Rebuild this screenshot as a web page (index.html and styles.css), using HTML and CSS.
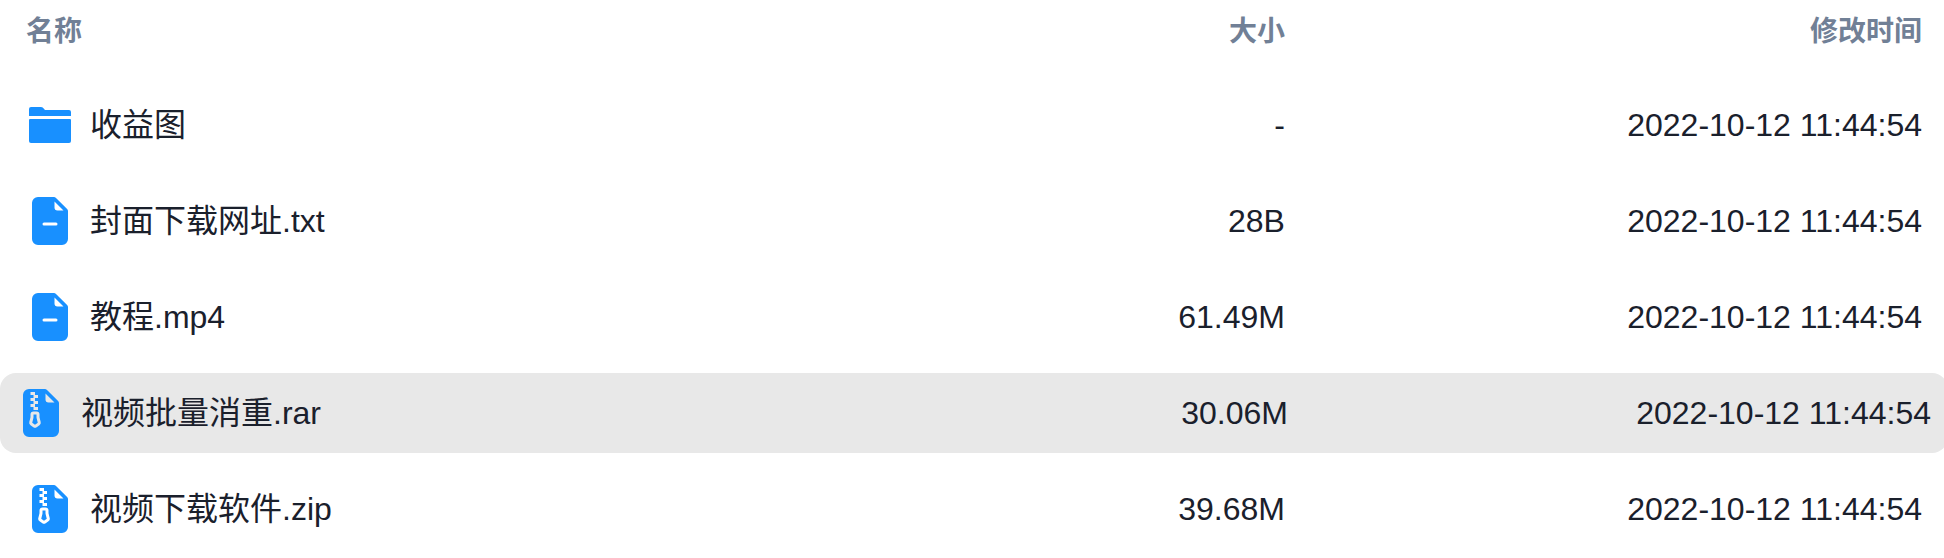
FILE: index.html
```html
<!DOCTYPE html>
<html lang="zh-CN">
<head>
    <meta charset="UTF-8">
    <meta name="viewport" content="width=device-width, initial-scale=1.0">
    <title>文件列表</title>
    <link rel="stylesheet" href="styles.css">
</head>
<body>
    <!-- icônes partagées -->
    <svg class="sprite" aria-hidden="true">
        <symbol id="icon-folder" viewBox="0 0 48 48">
            <path d="M3 8a2 2 0 0 1 2-2h10q1 0 1.700.6L19 9h24a2 2 0 0 1 2 2v4H3z"/>
            <path d="M3 19a1 1 0 0 1 1-1h40a1 1 0 0 1 1 1v21a2 2 0 0 1-2 2H5a2 2 0 0 1-2-2z"/>
        </symbol>
        <symbol id="icon-file" viewBox="0 0 16 16">
            <path d="M9.293 0H4a2 2 0 0 0-2 2v12a2 2 0 0 0 2 2h8a2 2 0 0 0 2-2V4.707A1 1 0 0 0 13.707 4L10 .293A1 1 0 0 0 9.293 0zM9.500 3.500v-2l3 3h-2a1 1 0 0 1-1-1zM6 8.500h4a.5.5 0 0 1 0 1H6a.5.5 0 0 1 0-1z" fill-rule="evenodd"/>
        </symbol>
        <symbol id="icon-zip" viewBox="0 0 16 16">
            <path d="M5.500 9.438V8.500h1v.938a1 1 0 0 0 .03.243l.4 1.598-.93.62-.93-.62.4-1.598a1 1 0 0 0 .03-.243z"/>
            <path d="M9.293 0H4a2 2 0 0 0-2 2v12a2 2 0 0 0 2 2h8a2 2 0 0 0 2-2V4.707A1 1 0 0 0 13.707 4L10 .293A1 1 0 0 0 9.293 0zM9.500 3.500v-2l3 3h-2a1 1 0 0 1-1-1zm-4-.5V2h-1V1H6v1h1v1H6v1h1v1H6v1h1v1H5.500V6h-1V5h1V4h-1V3h1zm0 4.500h1a1 1 0 0 1 1 1v.938l.4 1.599a1 1 0 0 1-.416 1.074l-.93.62a1 1 0 0 1-1.109 0l-.93-.62a1 1 0 0 1-.415-1.074l.4-1.599V8.500a1 1 0 0 1 1-1z" fill-rule="evenodd"/>
        </symbol>
    </svg>

    <table class="list">
        <thead class="head">
            <tr class="row">
                <th class="name">名称</th>
                <th class="size">大小</th>
                <th class="date">修改时间</th>
            </tr>
        </thead>
        <tbody class="items">
            <tr class="row">
                <td class="name"><a href="#"><svg class="icon"><use href="#icon-folder"/></svg>收益图</a></td>
                <td class="size">-</td>
                <td class="date">2022-10-12 11:44:54</td>
            </tr>
            <tr class="row">
                <td class="name"><a href="#"><svg class="icon"><use href="#icon-file"/></svg>封面下载网址.txt</a></td>
                <td class="size">28B</td>
                <td class="date">2022-10-12 11:44:54</td>
            </tr>
            <tr class="row">
                <td class="name"><a href="#"><svg class="icon"><use href="#icon-file"/></svg>教程.mp4</a></td>
                <td class="size">61.49M</td>
                <td class="date">2022-10-12 11:44:54</td>
            </tr>
            <tr class="row active">
                <td class="name"><a href="#"><svg class="icon"><use href="#icon-zip"/></svg>视频批量消重.rar</a></td>
                <td class="size">30.06M</td>
                <td class="date">2022-10-12 11:44:54</td>
            </tr>
            <tr class="row">
                <td class="name"><a href="#"><svg class="icon"><use href="#icon-zip"/></svg>视频下载软件.zip</a></td>
                <td class="size">39.68M</td>
                <td class="date">2022-10-12 11:44:54</td>
            </tr>
        </tbody>
    </table>
</body>
</html>
```

FILE: styles.css
```css
body {
    margin: 0;
    background: #fff;
    color: #1a202c;
    font-family: "Liberation Sans", "Noto Sans CJK SC", sans-serif;
    font-size: 32px;
    line-height: 48px;
    overflow-x: hidden;
}
.sprite {
    display: none;
}
.list {
    display: block;
    padding: 11px 6px 0 10px;
}
.head {
    display: block;
    margin-bottom: 32px;
    color: #718096;
    font-size: 28px;
    line-height: 42px;
}
.items {
    display: flex;
    flex-direction: column;
    gap: 16px;
}
.row {
    display: grid;
    grid-template-columns: 50% 16.4% 33.6%;
    align-items: center;
    padding: 0 16px;
    border-radius: 16px;
}
.items .row {
    min-height: 80px;
}
/* la ligne survolée déborde de la liste */
.items .row.active {
    margin: 0 -10px;
    padding: 0 17px;
    background: #e8e8e8;
}
.row th,
.row td {
    padding: 0;
    white-space: nowrap;
}
.row .name {
    text-align: left;
}
.row .size,
.row .date {
    text-align: right;
}
.name a {
    display: flex;
    align-items: center;
    gap: 16px;
    color: inherit;
    text-decoration: none;
}
.icon {
    flex: none;
    width: 48px;
    height: 48px;
    fill: #1890ff;
}
```
